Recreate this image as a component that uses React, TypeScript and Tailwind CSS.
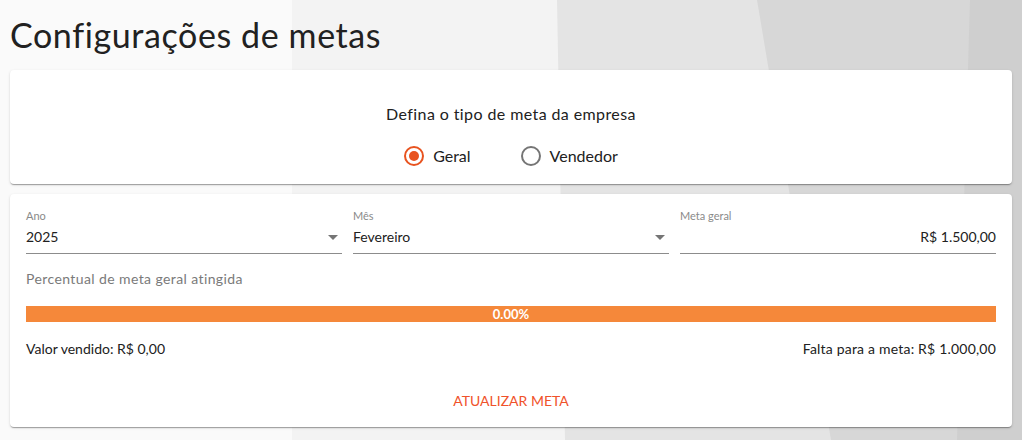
import React from "react";

const font = { fontFamily: "Lato, 'Noto Sans', sans-serif" };

function Background() {
  return (
    <svg className="absolute inset-0 w-full h-full" viewBox="0 0 1022 440" preserveAspectRatio="none">
      <rect x="0" y="0" width="1022" height="440" fill="#cfcfcf" />
      <polygon points="0,0 970,0 957,440 0,440" fill="#d7d7d7" />
      <polygon points="0,0 757,0 831,440 0,440" fill="#e4e4e4" />
      <polygon points="0,0 557,0 565,440 0,440" fill="#f3f3f3" />
      <polygon points="0,0 292,0 292,440 0,440" fill="#fafafa" />
    </svg>
  );
}

function Arrow() {
  return (
    <svg width="10" height="5" viewBox="0 0 10 5" className="shrink-0">
      <polygon points="0,0 10,0 5,5" fill="#757575" />
    </svg>
  );
}

function Field({ label, value, select, right }: { label: string; value: string; select?: boolean; right?: boolean }) {
  return (
    <div className="flex-1 pt-[16px]">
      <div className="h-[12px] text-[11px] leading-[12px] text-[#8a8a8a]">{label}</div>
      <div className="mt-[3px] flex items-center h-[24px] border-b border-[#8c8c8c] box-content pb-[4px]">
        <div className={`flex-1 text-[14px] leading-[24px] text-[#212121] ${right ? "text-right" : ""}`}>{value}</div>
        {select && (
          <div className="pr-[4px] pl-2">
            <Arrow />
          </div>
        )}
      </div>
    </div>
  );
}

function Radio({ checked, label }: { checked?: boolean; label: string }) {
  return (
    <div className="flex items-center gap-[9px]">
      <div
        className={`w-[20px] h-[20px] rounded-full border-2 flex items-center justify-center ${
          checked ? "border-[#e8531f]" : "border-[#757575]"
        }`}
      >
        {checked && <div className="w-[10px] h-[10px] rounded-full bg-[#e8531f]" />}
      </div>
      <span className="text-[16px] leading-[20px] text-[#212121]">{label}</span>
    </div>
  );
}

export default function App() {
  return (
    <div className="relative w-full h-[440px] overflow-hidden" style={font}>
      <Background />
      <div className="relative px-[10px]">
        <h1 className="pt-[15px] text-[34px] leading-[40px] tracking-[0.6px] text-[#212121] font-normal">Configurações de metas</h1>
        <div className="mt-[15px] h-[114px] bg-white rounded-[4px] shadow-[0_2px_1px_-1px_rgba(0,0,0,0.2),0_1px_1px_0_rgba(0,0,0,0.14),0_1px_3px_0_rgba(0,0,0,0.12)] flex flex-col items-center pt-[32px]">
          <div className="text-[16px] leading-[24px] tracking-[0.4px] text-[#212121]">Defina o tipo de meta da empresa</div>
          <div className="mt-[9px] h-[42px] flex items-center gap-[50px]">
            <Radio checked label="Geral" />
            <Radio label="Vendedor" />
          </div>
        </div>
        <div className="mt-[10px] h-[233px] bg-white rounded-[4px] shadow-[0_2px_1px_-1px_rgba(0,0,0,0.2),0_1px_1px_0_rgba(0,0,0,0.14),0_1px_3px_0_rgba(0,0,0,0.12)] px-[16px]">
          <div className="flex gap-[11px]">
            <Field label="Ano" value="2025" select />
            <Field label="Mês" value="Fevereiro" select />
            <Field label="Meta geral" value="R$ 1.500,00" right />
          </div>
          <div className="mt-[15px] text-[14px] leading-[20px] tracking-[0.4px] text-[#7a7a7a]">Percentual de meta geral atingida</div>
          <div className="mt-[17px] h-[16px] bg-[#f5883a] flex items-center justify-center text-[13px] font-bold text-white leading-[16px]">
            0.00%
          </div>
          <div className="mt-[17px] flex justify-between text-[14px] leading-[20px] text-[#212121]">
            <span>Valor vendido: R$ 0,00</span>
            <span className="tracking-[0.2px]">Falta para a meta: R$ 1.000,00</span>
          </div>
          <div className="mt-[32px] text-center text-[14px] leading-[20px] text-[#f0522a]">ATUALIZAR META</div>
        </div>
      </div>
    </div>
  );
}
